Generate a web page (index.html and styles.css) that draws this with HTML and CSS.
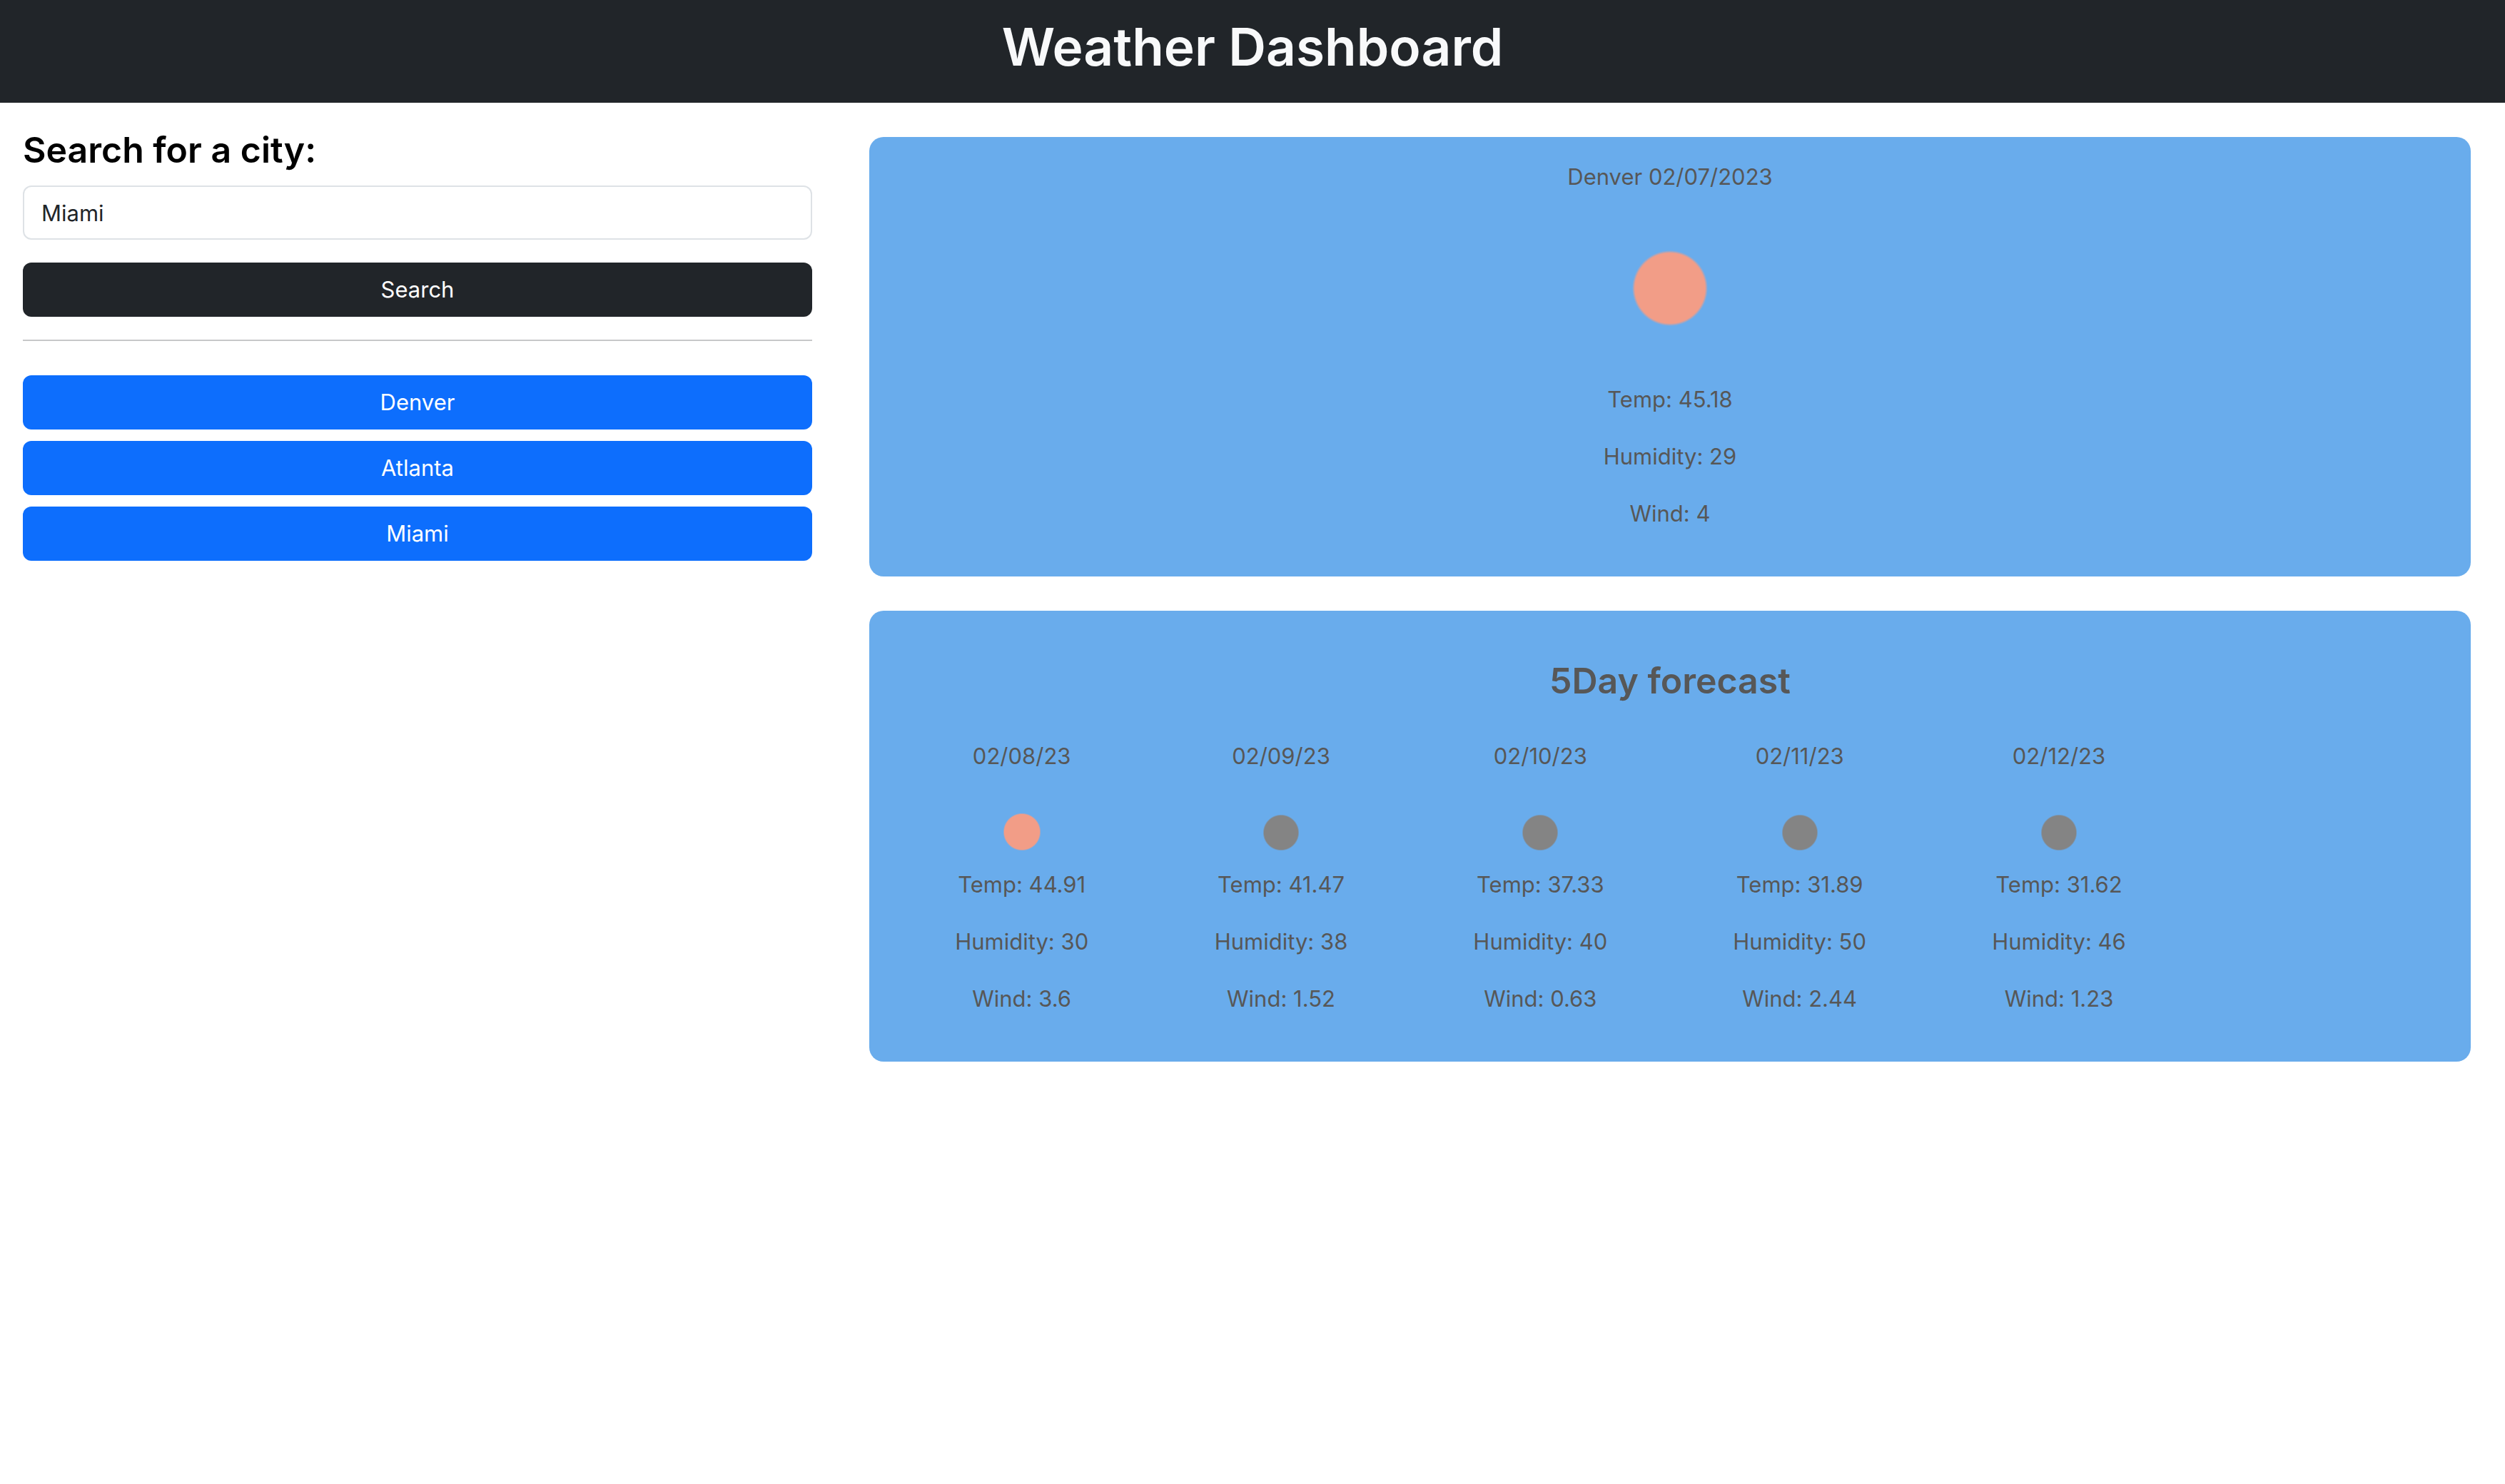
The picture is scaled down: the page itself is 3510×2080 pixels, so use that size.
FILE: index.html
```html
<!DOCTYPE html>
<html lang="en">
<head>
  <meta charset="utf-8">
  <meta name="viewport" content="width=device-width, initial-scale=1">
  <title>Weather Dashboard</title>
  <link rel="stylesheet" href="styles.css">
</head>
<body>
  <header class="site-header">
    <h1 class="site-title">Weather Dashboard</h1>
  </header>
  <main class="dashboard">
    <aside class="sidebar">
      <form class="search">
        <label class="search-label" for="city">Search for a city:</label>
        <input class="search-input" id="city" type="text" value="Miami">
        <button class="btn btn-dark" type="button">Search</button>
      </form>
      <hr class="divider">
      <div class="history">
        <button class="btn btn-primary" type="button">Denver</button>
        <button class="btn btn-primary" type="button">Atlanta</button>
        <button class="btn btn-primary" type="button">Miami</button>
      </div>
    </aside>
    <div class="results">
      <section class="card">
        <p class="line">Denver 02/07/2023</p>
        <svg class="icon icon-large" viewBox="0 0 100 100" aria-hidden="true">
          <defs>
            <radialGradient id="sun">
              <stop offset="0.91" stop-color="#f29d87"/>
              <stop offset="0.98" stop-color="#f29d87" stop-opacity="0"/>
            </radialGradient>
            <radialGradient id="cloud">
              <stop offset="0.91" stop-color="#848484"/>
              <stop offset="0.98" stop-color="#848484" stop-opacity="0"/>
            </radialGradient>
          </defs>
          <circle cx="50" cy="50" r="27" fill="url(#sun)"/>
        </svg>
        <p class="line">Temp: 45.18</p>
        <p class="line">Humidity: 29</p>
        <p class="line">Wind: 4</p>
      </section>
      <section class="card">
        <h2 class="card-title">5Day forecast</h2>
        <div class="days">
          <div class="day">
            <p class="line">02/08/23</p>
            <svg class="icon" viewBox="0 0 100 100" aria-hidden="true"><circle cx="50" cy="50" r="27" fill="url(#sun)"/></svg>
            <p class="line">Temp: 44.91</p>
            <p class="line">Humidity: 30</p>
            <p class="line">Wind: 3.6</p>
          </div>
          <div class="day">
            <p class="line">02/09/23</p>
            <svg class="icon" viewBox="0 0 100 100" aria-hidden="true"><circle cx="50" cy="51" r="26" fill="url(#cloud)"/></svg>
            <p class="line">Temp: 41.47</p>
            <p class="line">Humidity: 38</p>
            <p class="line">Wind: 1.52</p>
          </div>
          <div class="day">
            <p class="line">02/10/23</p>
            <svg class="icon" viewBox="0 0 100 100" aria-hidden="true"><circle cx="50" cy="51" r="26" fill="url(#cloud)"/></svg>
            <p class="line">Temp: 37.33</p>
            <p class="line">Humidity: 40</p>
            <p class="line">Wind: 0.63</p>
          </div>
          <div class="day">
            <p class="line">02/11/23</p>
            <svg class="icon" viewBox="0 0 100 100" aria-hidden="true"><circle cx="50" cy="51" r="26" fill="url(#cloud)"/></svg>
            <p class="line">Temp: 31.89</p>
            <p class="line">Humidity: 50</p>
            <p class="line">Wind: 2.44</p>
          </div>
          <div class="day">
            <p class="line">02/12/23</p>
            <svg class="icon" viewBox="0 0 100 100" aria-hidden="true"><circle cx="50" cy="51" r="26" fill="url(#cloud)"/></svg>
            <p class="line">Temp: 31.62</p>
            <p class="line">Humidity: 46</p>
            <p class="line">Wind: 1.23</p>
          </div>
        </div>
      </section>
    </div>
  </main>
</body>
</html>
```

FILE: styles.css
```css
* {
  box-sizing: border-box;
}

body {
  margin: 0;
  background: #fff;
  color: #212529;
  font-family: Inter, "Liberation Sans", sans-serif;
  font-size: 31px;
  line-height: 48px;
}

.site-header {
  padding: 18px 32px 30px;
  background: #212529;
  color: #f8f9fa;
  text-align: center;
}

.site-title {
  margin: 0;
  font-size: 73px;
  font-weight: 600;
  line-height: 96px;
}

.dashboard {
  display: grid;
  grid-template-columns: 1fr 2fr;
  align-items: start;
}

.sidebar {
  padding: 32px;
}

.search {
  display: flex;
  flex-direction: column;
}

.search-label {
  margin-bottom: 16px;
  color: #000;
  font-size: 50px;
  font-weight: 600;
  line-height: 68px;
}

.search-input {
  width: 100%;
  height: 76px;
  margin-bottom: 32px;
  padding: 12px 24px;
  border: 2px solid #dee2e6;
  border-radius: 12px;
  background: #fff;
  color: #212529;
  font: inherit;
}

.btn {
  width: 100%;
  padding: 14px 24px;
  border: 0;
  border-radius: 12px;
  color: #fff;
  font: inherit;
  text-align: center;
}

.btn-dark {
  background: #212529;
}

.btn-primary {
  background: #0d6efd;
}

.divider {
  margin: 32px 0 48px;
  border: 0;
  border-top: 2px solid #c7c8c9;
}

.history {
  display: flex;
  flex-direction: column;
  gap: 16px;
}

.results {
  display: flex;
  flex-direction: column;
  gap: 48px;
  padding: 48px;
}

.card {
  padding: 32px;
  border-radius: 20px;
  background: #69acec;
  color: #575757;
  text-align: center;
}

.card-title {
  margin: 32px 0 48px;
  font-size: 50px;
  font-weight: 600;
  line-height: 68px;
}

.line {
  margin: 0 0 32px;
}

.days {
  display: grid;
  grid-template-columns: repeat(6, 1fr);
}

.icon {
  display: block;
  width: 100px;
  height: 100px;
  margin: 0 auto;
}

.icon-large {
  width: 200px;
  height: 200px;
  margin-bottom: 32px;
}
```
